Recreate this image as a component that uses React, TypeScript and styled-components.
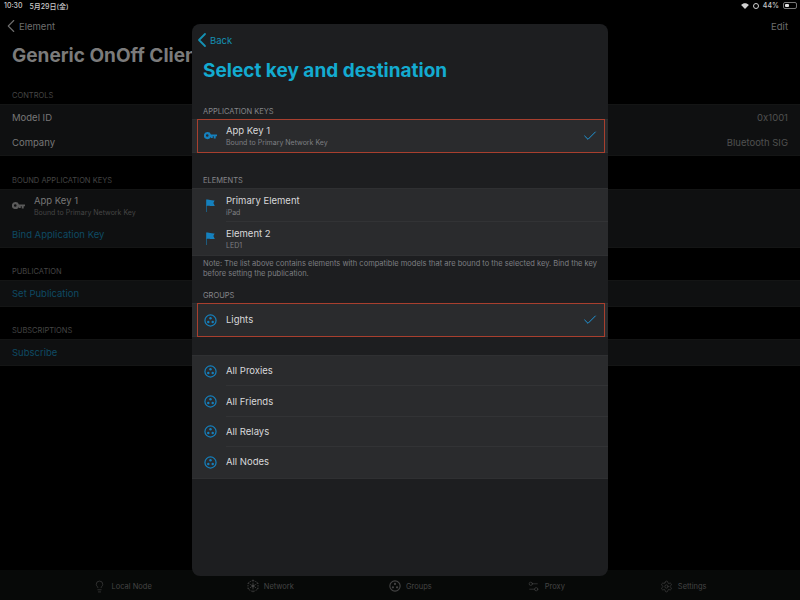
import * as React from 'react';
import styled, { createGlobalStyle } from 'styled-components';
import { ChevronLeft, Check, Lightbulb, Settings2, Settings } from 'lucide-react';

const Global = createGlobalStyle`
  html, body {
    margin: 0;
    padding: 0;
    background: #000;
    font-family: Inter, "Liberation Sans", "Noto Sans CJK JP", sans-serif;
  }
`;

const Screen = styled.div`
  position: relative;
  width: 800px;
  height: 600px;
  overflow: hidden;
  background: #000;
  display: flex;
  flex-direction: column;
`;

const StatusBar = styled.div`
  height: 11px;
  padding: 0 3px 0 4px;
  display: flex;
  justify-content: space-between;
  align-items: center;
  color: #c9c9c9;
  font-size: 7px;
  font-weight: 500;
`;

const StatusLeft = styled.div`
  display: flex;
  gap: 7px;
`;

const StatusRight = styled.div`
  display: flex;
  align-items: center;
  gap: 4px;
`;

const NavBar = styled.div`
  height: 30px;
  padding: 0 12px 0 0;
  display: flex;
  justify-content: space-between;
  align-items: center;
  color: #6d6d6d;
  font-size: 9.5px;
`;

const NavBack = styled.div`
  display: flex;
  align-items: center;
  svg {
    margin-right: -3px;
  }
`;

const LargeTitle = styled.h1`
  margin: 0;
  padding: 1px 12px 0;
  height: 36px;
  color: #7b7b7b;
  font-size: 19px;
  line-height: 28px;
  font-weight: 700;
  white-space: nowrap;
`;

const BgHeader = styled.div<{ $top: number }>`
  margin-top: ${p => p.$top}px;
  height: 12px;
  padding: 0 12px 2px;
  color: #454545;
  font-size: 7.5px;
  line-height: 12px;
`;

const BgGroup = styled.div`
  background: #0f1011;
  border-top: 1px solid #141515;
  border-bottom: 1px solid #141515;
`;

const BgRow = styled.div<{ $h: number }>`
  height: ${p => p.$h}px;
  padding: 0 12px;
  display: flex;
  justify-content: space-between;
  align-items: center;
  font-size: 9.5px;
  color: #777;
`;

const BgValue = styled.span`
  color: #505050;
`;

const BgLink = styled.span`
  color: #0e4a63;
`;

const BgKeyRow = styled.div`
  height: 31px;
  padding: 0 12px;
  display: flex;
  align-items: center;
  gap: 9px;
  color: #5a5a5a;
`;

const BgKeyText = styled.div`
  display: flex;
  flex-direction: column;
  gap: 2px;
  font-size: 9.5px;
  line-height: 12px;
  color: #777;
`;

const BgSmall = styled.span`
  font-size: 7px;
  line-height: 8px;
  color: #454545;
`;

const TabBar = styled.div`
  position: absolute;
  left: 0;
  right: 0;
  bottom: 0;
  height: 30px;
  background: #070908;
  display: flex;
  justify-content: center;
  gap: 95px;
  padding-top: 8px;
  box-sizing: border-box;
`;

const TabItem = styled.div`
  display: flex;
  align-items: center;
  gap: 5px;
  height: 16px;
  color: #444;
  font-size: 7.5px;
`;

const Modal = styled.div`
  position: absolute;
  left: 192px;
  top: 24px;
  width: 416px;
  height: 552px;
  border-radius: 8px;
  background: #1d1e20;
  overflow: hidden;
  display: flex;
  flex-direction: column;
`;

const BackRow = styled.div`
  height: 32px;
  padding-left: 0;
  display: flex;
  align-items: center;
  color: #1590b3;
  font-size: 9.5px;
  svg {
    margin: 0 -4px 0 -2px;
  }
`;

const Title = styled.h2`
  margin: 0;
  padding: 1px 11px 0;
  height: 45px;
  color: #13abd0;
  font-size: 19px;
  line-height: 28px;
  font-weight: 700;
  white-space: nowrap;
`;

const SectionHeader = styled.div<{ $top?: number }>`
  margin-top: ${p => p.$top ?? 0}px;
  height: 17px;
  padding: 0 11px;
  color: #85868a;
  font-size: 7.5px;
  line-height: 19px;
`;

const Group = styled.div<{ $top?: number }>`
  position: relative;
  margin-top: ${p => p.$top ?? 0}px;
  background: #2a2b2d;
  border-top: 1px solid #2f3032;
  border-bottom: 1px solid #2f3032;
`;

const Row = styled.div<{ $h: number }>`
  position: relative;
  height: ${p => p.$h}px;
  display: flex;
  align-items: center;
  padding: 0 10px 0 11px;
  gap: 9px;
  box-sizing: border-box;
`;

const Separator = styled.div`
  height: 1px;
  margin: -1px 0 0 34px;
  position: relative;
  background: #323335;
`;

const IconSlot = styled.div`
  width: 14px;
  height: 14px;
  flex: none;
  display: flex;
  align-items: center;
  justify-content: center;
  color: #1580bd;
`;

const RowText = styled.div`
  flex: 1;
  display: flex;
  flex-direction: column;
  gap: 2px;
`;

const RowTitle = styled.span`
  color: #d8d8da;
  font-size: 9.5px;
  line-height: 12px;
`;

const RowSub = styled.span`
  color: #7e7f83;
  font-size: 7px;
  line-height: 8px;
`;

const Highlight = styled.div`
  position: absolute;
  left: 5px;
  right: 3px;
  top: -1px;
  bottom: -1px;
  border: 1.5px solid #a83f2e;
  pointer-events: none;
`;

const Note = styled.div`
  padding: 3px 11px 0;
  height: 30px;
  box-sizing: border-box;
  color: #7e7f83;
  font-size: 7.5px;
  line-height: 9.5px;
`;

const KeyIcon = ({ size = 13 }: { size?: number }) => (
  <svg width={size} height={size * 0.55} viewBox="0 0 20 11" fill="currentColor">
    <path
      d="M5.5 0a5.5 5.5 0 0 1 5.2 3.7H20v3h-2v3.5h-3V6.7h-1.5v2.5h-3V7.3A5.5 5.5 0 1 1 5.5 0zM5 3.5a2 2 0 1 0 0 4 2 2 0 0 0 0-4z"
      fillRule="evenodd"
    />
  </svg>
);

const FlagIcon = () => (
  <svg width="10" height="13" viewBox="0 0 10 13" fill="currentColor">
    <path d="M1 0.5h.8V13H1z" opacity="0.7" />
    <path d="M1.4 0.8C3.5-.2 5 1.6 9.6 1.4L8.4 4l1.4 3C5.5 7.4 3.5 6 1.4 7z" />
  </svg>
);

const GroupIcon = ({ size = 13 }: { size?: number }) => (
  <svg width={size} height={size} viewBox="0 0 14 14" fill="currentColor">
    <circle cx="7" cy="7" r="6" fill="none" stroke="currentColor" strokeWidth="1.3" />
    <circle cx="7" cy="4.6" r="1.3" />
    <circle cx="4.6" cy="8.6" r="1.3" />
    <circle cx="9.4" cy="8.6" r="1.3" />
  </svg>
);

const NetworkIcon = () => (
  <svg width="12" height="14" viewBox="0 0 12 14" fill="none" stroke="currentColor" strokeWidth="0.8">
    <path d="M6 1 11 4v6l-5 3-5-3V4zM6 1v12M1 4l10 6M11 4 1 10" strokeDasharray="1.6 1" />
    <circle cx="6" cy="7" r="1.2" fill="currentColor" />
  </svg>
);

const Wifi = () => (
  <svg width="8" height="6" viewBox="0 0 18 14" fill="#d0d0d0">
    <path d="M9 14 0 4.5C5-1 13-1 18 4.5z" />
  </svg>
);

const Battery = styled.div`
  width: 14px;
  height: 7px;
  border: 1px solid #777;
  border-radius: 2px;
  box-sizing: border-box;
  padding: 1px;
  &::before {
    content: '';
    display: block;
    width: 44%;
    height: 100%;
    background: #e2e2e2;
    border-radius: 1px;
  }
`;

const Rotation = styled.div`
  width: 6px;
  height: 6px;
  border: 1.5px solid #d0d0d0;
  border-radius: 50%;
  box-sizing: border-box;
`;

const CheckMark = () => <Check size={16} strokeWidth={1.5} color="#1f96d8" />;

const systemGroups = ['All Proxies', 'All Friends', 'All Relays', 'All Nodes'];

export default function App() {
  return (
    <Screen>
      <Global />
      <StatusBar>
        <StatusLeft>
          <span>10:30</span>
          <span>5月29日(金)</span>
        </StatusLeft>
        <StatusRight>
          <Wifi />
          <Rotation />
          <span>44%</span>
          <Battery />
        </StatusRight>
      </StatusBar>
      <NavBar>
        <NavBack>
          <ChevronLeft size={22} strokeWidth={1.2} />
          Element
        </NavBack>
        <span>Edit</span>
      </NavBar>
      <LargeTitle>Generic OnOff Client</LargeTitle>

      <BgHeader $top={12}>CONTROLS</BgHeader>
      <BgGroup>
        <BgRow $h={25}>
          Model ID <BgValue>0x1001</BgValue>
        </BgRow>
        <BgRow $h={25}>
          Company <BgValue>Bluetooth SIG</BgValue>
        </BgRow>
      </BgGroup>

      <BgHeader $top={19}>BOUND APPLICATION KEYS</BgHeader>
      <BgGroup>
        <BgKeyRow>
          <KeyIcon />
          <BgKeyText>
            App Key 1
            <BgSmall>Bound to Primary Network Key</BgSmall>
          </BgKeyText>
        </BgKeyRow>
        <BgRow $h={26}>
          <BgLink>Bind Application Key</BgLink>
        </BgRow>
      </BgGroup>

      <BgHeader $top={18}>PUBLICATION</BgHeader>
      <BgGroup>
        <BgRow $h={25}>
          <BgLink>Set Publication</BgLink>
        </BgRow>
      </BgGroup>

      <BgHeader $top={18}>SUBSCRIPTIONS</BgHeader>
      <BgGroup>
        <BgRow $h={25}>
          <BgLink>Subscribe</BgLink>
        </BgRow>
      </BgGroup>

      <TabBar>
        <TabItem>
          <Lightbulb size={13} strokeWidth={1.2} />
          Local Node
        </TabItem>
        <TabItem>
          <NetworkIcon />
          Network
        </TabItem>
        <TabItem>
          <GroupIcon size={12} />
          Groups
        </TabItem>
        <TabItem>
          <Settings2 size={13} strokeWidth={1.2} />
          Proxy
        </TabItem>
        <TabItem>
          <Settings size={13} strokeWidth={1.2} />
          Settings
        </TabItem>
      </TabBar>

      <Modal>
        <BackRow>
          <ChevronLeft size={24} strokeWidth={1.8} />
          Back
        </BackRow>
        <Title>Select key and destination</Title>

        <SectionHeader>APPLICATION KEYS</SectionHeader>
        <Group>
          <Row $h={32}>
            <IconSlot>
              <KeyIcon />
            </IconSlot>
            <RowText>
              <RowTitle>App Key 1</RowTitle>
              <RowSub>Bound to Primary Network Key</RowSub>
            </RowText>
            <CheckMark />
          </Row>
          <Highlight />
        </Group>

        <SectionHeader $top={18}>ELEMENTS</SectionHeader>
        <Group>
          <Row $h={33}>
            <IconSlot>
              <FlagIcon />
            </IconSlot>
            <RowText>
              <RowTitle>Primary Element</RowTitle>
              <RowSub>iPad</RowSub>
            </RowText>
          </Row>
          <Separator />
          <Row $h={33}>
            <IconSlot>
              <FlagIcon />
            </IconSlot>
            <RowText>
              <RowTitle>Element 2</RowTitle>
              <RowSub>LED1</RowSub>
            </RowText>
          </Row>
        </Group>
        <Note>
          Note: The list above contains elements with compatible models that are bound to the selected key. Bind the key
          before setting the publication.
        </Note>

        <SectionHeader>GROUPS</SectionHeader>
        <Group>
          <Row $h={32}>
            <IconSlot>
              <GroupIcon />
            </IconSlot>
            <RowText>
              <RowTitle>Lights</RowTitle>
            </RowText>
            <CheckMark />
          </Row>
          <Highlight />
        </Group>

        <Group $top={18}>
          {systemGroups.map((name, i) => (
            <React.Fragment key={name}>
              {i > 0 && <Separator />}
              <Row $h={30.4}>
                <IconSlot>
                  <GroupIcon />
                </IconSlot>
                <RowText>
                  <RowTitle>{name}</RowTitle>
                </RowText>
              </Row>
            </React.Fragment>
          ))}
        </Group>
      </Modal>
    </Screen>
  );
}
